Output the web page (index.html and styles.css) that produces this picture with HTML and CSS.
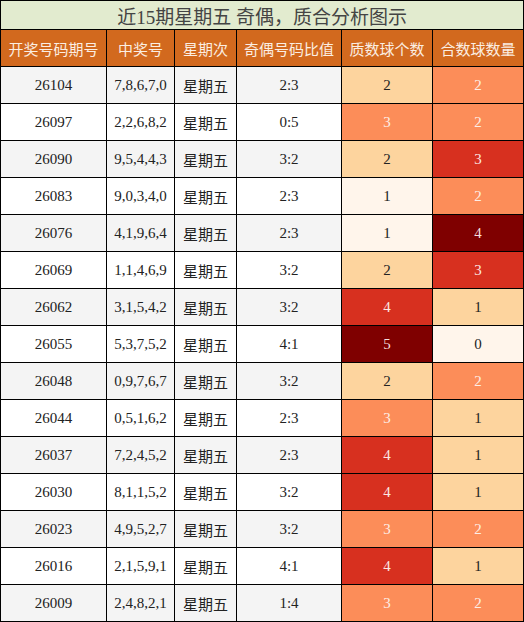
FILE: index.html
```html
<!DOCTYPE html>
<html lang="zh-CN">
<head>
    <meta charset="UTF-8">
    <meta name="viewport" content="width=device-width, initial-scale=1.0">
    <title>近15期星期五 奇偶，质合分析图示</title>
    <link rel="stylesheet" href="styles.css">
</head>
<body>

    <table class="chart">
        <colgroup>
            <col class="c-issue">
            <col class="c-nums">
            <col class="c-day">
            <col class="c-ratio">
            <col class="c-prime">
            <col class="c-comp">
        </colgroup>
        <thead>
            <tr class="title-row">
                <th colspan="6">近15期星期五 奇偶，质合分析图示</th>
            </tr>
            <tr class="head-row">
                <th>开奖号码期号</th>
                <th>中奖号</th>
                <th>星期次</th>
                <th>奇偶号码比值</th>
                <th>质数球个数</th>
                <th>合数球数量</th>
            </tr>
        </thead>
        <tbody id="rows"></tbody>
    </table>

    <script>
        // issue, numbers, odd:even, primes, composites
        const draws = [
            ["26104", "7,8,6,7,0", "2:3", 2, 2],
            ["26097", "2,2,6,8,2", "0:5", 3, 2],
            ["26090", "9,5,4,4,3", "3:2", 2, 3],
            ["26083", "9,0,3,4,0", "2:3", 1, 2],
            ["26076", "4,1,9,6,4", "2:3", 1, 4],
            ["26069", "1,1,4,6,9", "3:2", 2, 3],
            ["26062", "3,1,5,4,2", "3:2", 4, 1],
            ["26055", "5,3,7,5,2", "4:1", 5, 0],
            ["26048", "0,9,7,6,7", "3:2", 2, 2],
            ["26044", "0,5,1,6,2", "2:3", 3, 1],
            ["26037", "7,2,4,5,2", "2:3", 4, 1],
            ["26030", "8,1,1,5,2", "3:2", 4, 1],
            ["26023", "4,9,5,2,7", "3:2", 3, 2],
            ["26016", "2,1,5,9,1", "4:1", 4, 1],
            ["26009", "2,4,8,2,1", "1:4", 3, 2]
        ];

        const tbody = document.getElementById("rows");

        draws.forEach((d, i) => {
            const tr = document.createElement("tr");
            tr.className = i % 2 === 0 ? "odd" : "even";
            tr.innerHTML =
                `<td class="num">${d[0]}</td>` +
                `<td class="num">${d[1]}</td>` +
                `<td class="day">星期五</td>` +
                `<td class="num">${d[2]}</td>` +
                `<td class="num heat lv${d[3] - 1}">${d[3]}</td>` +
                `<td class="num heat lv${d[4]}">${d[4]}</td>`;
            tbody.appendChild(tr);
        });
    </script>

</body>
</html>
```

FILE: styles.css
```css
body {
    margin: 0;
    background: #fff;
    font-family: "Liberation Serif", "Noto Sans CJK SC", serif;
}
.chart {
    border-collapse: collapse;
    table-layout: fixed;
    width: 523px;
}
.c-issue { width: 106px; }
.c-nums { width: 68px; }
.c-day { width: 62px; }
.c-ratio { width: 105px; }
.c-prime { width: 91px; }
.c-comp { width: 91px; }
.chart th,
.chart td {
    border: 1px solid #000;
    padding: 0;
    text-align: center;
}
.title-row th {
    height: 28px;
    background-color: #e2ebcf;
    color: #444;
    font-size: 19px;
    font-weight: normal;
}
.head-row th {
    height: 36px;
    background-color: #d2691e;
    color: #fbeee2;
    font-size: 15px;
    font-weight: normal;
}
.chart td {
    height: 36px;
    font-size: 15px;
    color: #222;
}
.odd td {
    background-color: #f4f4f4;
}
.even td {
    background-color: #fff;
}
.day {
    font-family: "Noto Sans CJK SC", sans-serif;
    color: #111;
}
.odd .lv0, .even .lv0 { background-color: #fff5eb; }
.odd .lv1, .even .lv1 { background-color: #fdd49e; }
.odd .lv2, .even .lv2 { background-color: #fc8d59; color: #fdeee6; }
.odd .lv3, .even .lv3 { background-color: #d7301f; color: #fbe6e2; }
.odd .lv4, .even .lv4 { background-color: #7f0000; color: #f4dede; }
```
